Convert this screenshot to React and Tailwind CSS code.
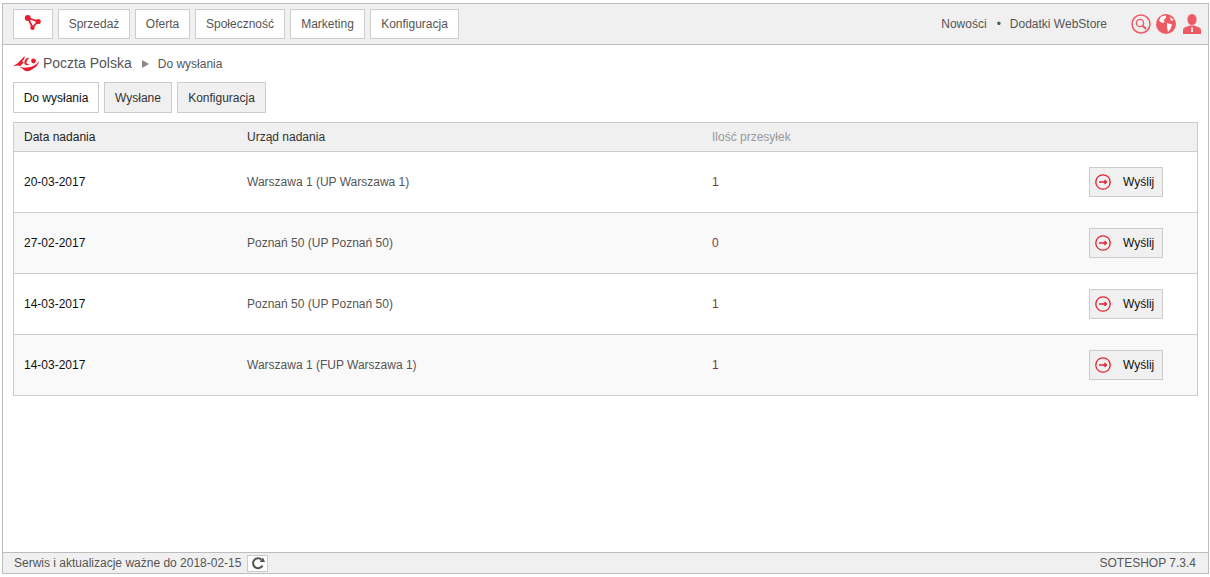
import React from "react";

const menu = [
  { nazwa: "Sprzedaż", w: "w-[72px]" },
  { nazwa: "Oferta", w: "w-[55px]" },
  { nazwa: "Społeczność", w: "w-[90px]" },
  { nazwa: "Marketing", w: "w-[75px]" },
  { nazwa: "Konfiguracja", w: "w-[89px]" },
];
const wiersze = [
  { data: "20-03-2017", urzad: "Warszawa 1 (UP Warszawa 1)", ilosc: 1 },
  { data: "27-02-2017", urzad: "Poznań 50 (UP Poznań 50)", ilosc: 0 },
  { data: "14-03-2017", urzad: "Poznań 50 (UP Poznań 50)", ilosc: 1 },
  { data: "14-03-2017", urzad: "Warszawa 1 (FUP Warszawa 1)", ilosc: 1 },
];

function LogoSote() {
  return (
    <svg width="18" height="16" viewBox="0 0 18 16">
      <path d="M4 3 L14 6.5 L8.5 12.5 Z" fill="none" stroke="#e5202e" strokeWidth="1.8" />
      <circle cx="3.8" cy="3" r="3" fill="#e5202e" />
      <circle cx="14.2" cy="6.5" r="2.6" fill="#e5202e" />
      <circle cx="8.5" cy="12.8" r="2.2" fill="#e5202e" />
    </svg>
  );
}

function LogoPoczta() {
  return (
    <svg width="26" height="17" viewBox="0 0 26 17">
      <path d="M0 11.5 C2 9.5 4 9 5.5 7.5 C7 5.5 9 4 11.5 1 L11.5 3.5 L9 6.5 L11 7 L7.5 11 L3.5 10.5 Z" fill="#e5202e" />
      <path d="M15 2.5 C11.5 4 10.5 7.5 12 9.5 C13.5 11 16 10 17 8.5 C15 9.5 13.5 9 13.5 7.5 C13.5 6 14.5 4.5 16 3.5 Z" fill="#e5202e" />
      <circle cx="20.5" cy="6" r="2.4" fill="#e5202e" />
      <path d="M5 11.5 C9 13 15 13 19 11.5 C22 10.5 24.5 8.5 26 6 C25.5 10 22 13 19 14.5 C16 16.5 13 16.8 11 15 C9.5 13.5 7.5 12.5 5 11.5 Z" fill="#e5202e" />
    </svg>
  );
}

function IkonaSzukaj() {
  return (
    <svg width="20" height="20" viewBox="0 0 20 20" fill="none" stroke="#ee5a64">
      <circle cx="10" cy="10" r="9" strokeWidth="1.5" />
      <circle cx="9" cy="9" r="3.6" strokeWidth="1.4" />
      <path d="M11.7 11.7 L15 15" strokeWidth="2" />
    </svg>
  );
}

function IkonaGlobus() {
  return (
    <svg width="20" height="20" viewBox="0 0 20 20">
      <circle cx="10" cy="10" r="10" fill="#ee5a64" />
      <path d="M5 2.5 L10 1.5 L10 4 L7.5 6 L9 8 L6 9 L3 6.5 Z M11 9 L16 10.5 L14.5 15 L12 18 L11 13 Z M14 3 L18 6 L15 7 Z" fill="#ffffff" />
    </svg>
  );
}

function IkonaUser() {
  return (
    <svg width="18" height="20" viewBox="0 0 18 20">
      <ellipse cx="9" cy="5.5" rx="4.6" ry="5.5" fill="#ee5a64" />
      <path d="M0 20 L0 16 C0 13 4 13 6.5 11.5 L11.5 11.5 C14 13 18 13 18 16 L18 20 Z" fill="#ee5a64" />
      <path d="M8.5 13 L9.5 13 L10 18 L8 18 Z" fill="#ffffff" />
    </svg>
  );
}

function IkonaWyslij() {
  return (
    <svg width="16" height="16" viewBox="0 0 16 16" fill="none" stroke="#e5202e">
      <circle cx="8" cy="8" r="7.2" strokeWidth="1.3" />
      <path d="M4 8 L11.5 8 M9.5 6 L11.5 8 L9.5 10" strokeWidth="1.3" />
    </svg>
  );
}

function IkonaOdswiez() {
  return (
    <svg width="14" height="14" viewBox="0 0 14 14" fill="none">
      <path d="M11.5 9.5 A5 5 0 1 1 10.5 3.5" stroke="#555555" strokeWidth="2" />
      <path d="M8.5 6 L14 6 L12 1.5 Z" fill="#555555" />
    </svg>
  );
}

export default function App() {
  return (
    <div className="pt-[3px] pl-[2px] pr-[1px] bg-white font-['Liberation_Sans',Arial,sans-serif] text-[12px] text-[#555]">
      <div className="h-[571px] flex flex-col border border-[#bdbdbd]">
        {/* Górne menu */}
        <div className="h-[41px] flex items-center justify-between bg-[#f0f0f0] border-b border-[#bdbdbd] pl-[10px] pr-[7px] shrink-0">
          <div className="flex gap-[5px]">
            <div className="w-[40px] h-[30px] flex items-center justify-center bg-white border border-[#ccc] pb-[2px]">
              <LogoSote />
            </div>
            {menu.map((m) => (
              <div key={m.nazwa} className={`${m.w} h-[30px] flex items-center justify-center bg-white border border-[#ccc]`}>
                {m.nazwa}
              </div>
            ))}
          </div>
          <div className="flex items-center">
            <span>Nowości</span>
            <span className="ml-[10px] mr-[9px] text-[12px]">•</span>
            <span>Dodatki WebStore</span>
            <div className="ml-[24px] flex items-center">
              <IkonaSzukaj />
              <span className="ml-[5px]"><IkonaGlobus /></span>
              <span className="ml-[7px]"><IkonaUser /></span>
            </div>
          </div>
        </div>

        {/* Treść */}
        <div className="flex-1 bg-white pl-[10px] pr-[10px]">
          <div className="h-[37px] flex items-center">
            <LogoPoczta />
            <span className="ml-[4px] text-[14px]">Poczta Polska</span>
            <span className="ml-[10px] w-0 h-0 border-y-[4px] border-y-transparent border-l-[7px] border-l-[#888]"></span>
            <span className="ml-[9px]">Do wysłania</span>
          </div>
          <div className="flex gap-[5px]">
            <div className="w-[86px] h-[31px] flex items-center justify-center bg-white border border-[#ccc] text-[#111]">Do wysłania</div>
            <div className="w-[68px] h-[31px] flex items-center justify-center bg-[#f0f0f0] border border-[#ccc] text-[#333]">Wysłane</div>
            <div className="w-[89px] h-[31px] flex items-center justify-center bg-[#f0f0f0] border border-[#ccc] text-[#333]">Konfiguracja</div>
          </div>

          <div className="mt-[9px] border border-[#ccc]">
            <div className="h-[29px] grid grid-cols-[223px_465px_1fr] items-center pl-[10px] bg-[#f0f0f0] border-b border-[#ccc]">
              <div className="text-[#222]">Data nadania</div>
              <div className="text-[#333]">Urząd nadania</div>
              <div className="text-[#999]">Ilość przesyłek</div>
            </div>
            {wiersze.map((w, i) => (
              <div
                key={i}
                className={`grid grid-cols-[223px_465px_1fr_auto] items-center pl-[10px] pr-[34px] ${i % 2 === 1 ? "bg-[#f9f9f9]" : "bg-white"} ${i < 3 ? "h-[61px] border-b border-[#ccc]" : "h-[60px]"}`}
              >
                <div className="text-[#111]">{w.data}</div>
                <div>{w.urzad}</div>
                <div className="text-[#7a3b3b]">{w.ilosc}</div>
                <div className="w-[74px] h-[30px] flex items-center bg-[#f0f0f0] border border-[#ccc] pl-[5px] text-[#111]">
                  <IkonaWyslij />
                  <span className="ml-[12px]">Wyślij</span>
                </div>
              </div>
            ))}
          </div>
        </div>

        {/* Stopka */}
        <div className="h-[21px] flex items-center justify-between bg-[#f0f0f0] border-t border-[#bdbdbd] pl-[11px] pr-[12px] shrink-0">
          <div className="flex items-center">
            <span>Serwis i aktualizacje ważne do 2018-02-15</span>
            <div className="ml-[6px] w-[21px] h-[17px] flex items-center justify-center bg-white border border-[#ccc]">
              <IkonaOdswiez />
            </div>
          </div>
          <span>SOTESHOP 7.3.4</span>
        </div>
      </div>
    </div>
  );
}
